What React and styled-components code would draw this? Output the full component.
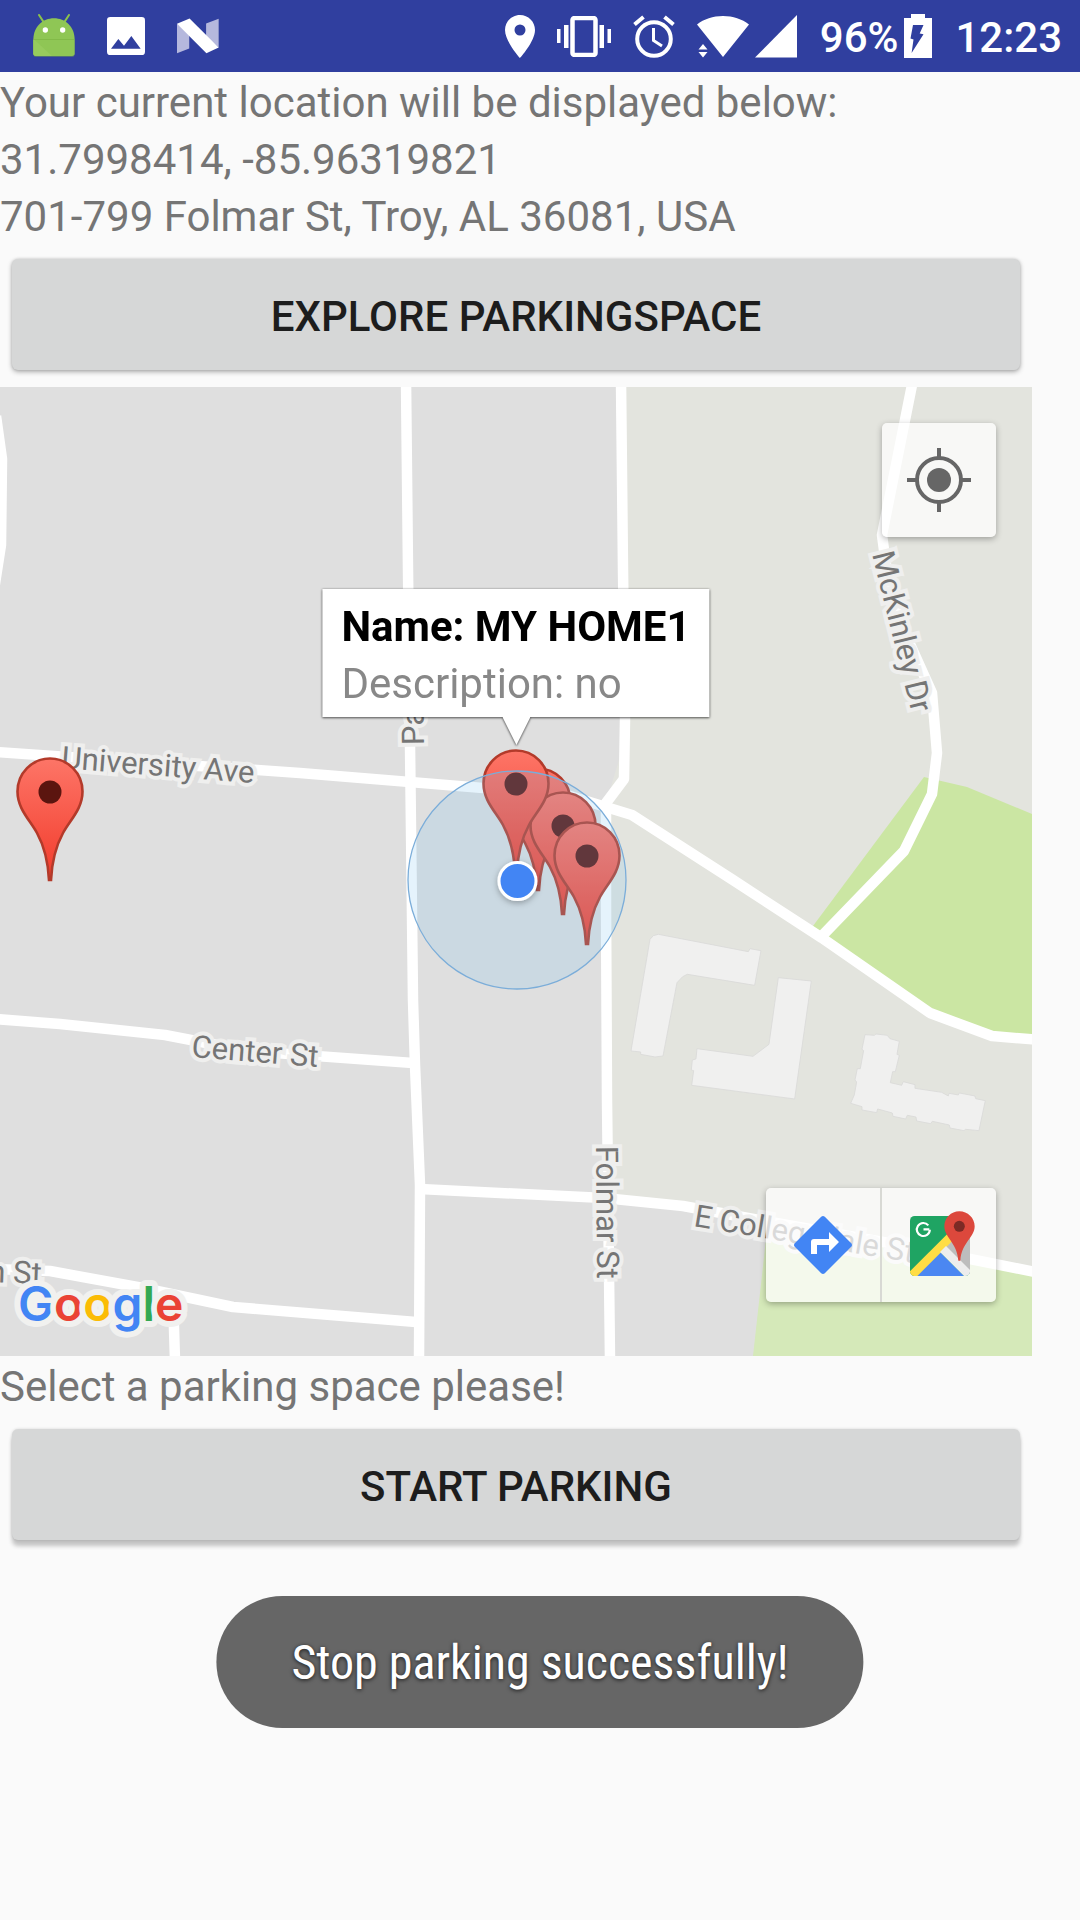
import React from "react";
import styled, { createGlobalStyle } from "styled-components";

const GlobalStyle = createGlobalStyle`
  *, *::before, *::after { box-sizing: border-box; }
  html, body { margin: 0; padding: 0; background: #fafafa; }
  body { font-family: Roboto, "Noto Sans", "Liberation Sans", sans-serif; }
`;

const Screen = styled.div`
  min-height: 100vh;
  background: #fafafa;
`;

const StatusBar = styled.header`
  display: flex;
  justify-content: space-between;
  align-items: center;
  height: 72px;
  padding: 0 18px 0 33px;
  background: #303f9f;
  color: #fff;
`;

const StatusGroup = styled.div`
  display: flex;
  align-items: center;
  gap: ${(p) => p.$gap}px;

  svg { display: block; flex: none; }
`;

const StatusText = styled.span`
  padding-top: 4px;
  font-size: 42px;
  font-weight: 500;
  line-height: 48px;
`;

const Content = styled.main`
  padding-right: 48px;
`;

const TextBlock = styled.section`
  padding-top: 2px;
  color: #757575;
  font-size: 42px;
  line-height: 57px;
`;

const Line = styled.p`
  margin: 0;
`;

const ActionButton = styled.button`
  display: block;
  width: calc(100% - 24px);
  height: 111px;
  margin: 14px 12px 17px;
  padding: 4px 0 0;
  border: 0;
  border-radius: 6px;
  background: #d6d7d7;
  color: #1d1d1d;
  font: 500 42px/48px Roboto, "Liberation Sans", sans-serif;
  text-transform: uppercase;
  box-shadow: ${(p) =>
    p.$raised
      ? "0 6px 4px rgba(0, 0, 0, 0.22), 0 0 3px rgba(0, 0, 0, 0.15)"
      : "0 2px 5px rgba(0, 0, 0, 0.3), 0 0 3px rgba(0, 0, 0, 0.15)"};
`;

const MapFrame = styled.section`
  position: relative;
  overflow: hidden;
`;

const MapCanvas = styled.svg`
  display: block;
  width: 100%;
  height: auto;
  background: #dfdfdf;
`;

const StreetLabel = styled.text`
  font-family: Roboto, "Liberation Sans", sans-serif;
  font-size: 31px;
  fill: #757575;
  stroke: #efefee;
  stroke-width: 8px;
  paint-order: stroke;
`;

const Wordmark = styled.text`
  font-family: Inter, Roboto, sans-serif;
  font-size: 48px;
  font-weight: 600;
  stroke: #f1f1ef;
  stroke-width: 12px;
  stroke-linejoin: round;
  paint-order: stroke;
`;

const InfoWindow = styled.div`
  position: absolute;
  left: 50%;
  bottom: 63.1%;
  transform: translateX(-50%);
  display: flex;
  flex-direction: column;
  align-items: center;
  filter: drop-shadow(0 1px 1px rgba(0, 0, 0, 0.5)) drop-shadow(0 0 1px rgba(0, 0, 0, 0.3));

  svg { display: block; }
`;

const InfoBody = styled.div`
  padding: 9px 19px 5px;
  background: #fff;
  font-size: 42px;
  line-height: 57px;
  white-space: nowrap;
`;

const InfoTitle = styled.p`
  margin: 0;
  color: #000;
  font-weight: 700;
`;

const InfoText = styled.p`
  margin: 0;
  color: #888;
`;

const MapControls = styled.div`
  position: absolute;
  right: 36px;
  ${(p) => (p.$top ? "top: 36px;" : "bottom: 54px;")}
  display: flex;
  border-radius: 5px;
  overflow: hidden;
  box-shadow: 0 2px 6px rgba(0, 0, 0, 0.3);
`;

const MapButton = styled.button`
  display: flex;
  align-items: center;
  justify-content: center;
  box-sizing: content-box;
  width: 114px;
  height: 114px;
  padding: 0;
  border: 0;
  background: rgba(255, 255, 255, 0.73);

  & + & { border-left: 2px solid #d8d9d4; }
`;

const Toast = styled.div`
  position: fixed;
  left: 50%;
  bottom: 192px;
  transform: translateX(-50%);
  display: flex;
  align-items: center;
  height: 132px;
  padding: 2px 75px 0;
  border-radius: 66px;
  background: #666;
  color: #fff;
  font-family: "Roboto Condensed", Roboto, sans-serif;
  font-size: 48px;
  line-height: 56px;
  white-space: nowrap;
  text-shadow: 0 1px 4px rgba(0, 0, 0, 0.75);
`;

const AndroidIcon = () => (
  <svg width="42" height="44" viewBox="99 42 126 132" aria-hidden="true">
    <path d="M117 45 132 68M207 45 192 68" stroke="#8bc34a" strokeWidth="6" strokeLinecap="round" />
    <path d="M100 121V162q0 9 8 9H216q8 0 8-9V121z" fill="#4f6f77" />
    <path d="M100 118C101 80 128 55 162 55s61 25 62 63V160q0 8-8 8H108q-8 0-8-8z" fill="#8fc655" />
    <path d="M104 120 156 168H108q-8 0-8-8V120z" fill="#97cb5d" />
    <path d="M101 118.500H223" stroke="#7cb342" strokeWidth="2" />
    <circle cx="136" cy="90" r="8" fill="#fff" />
    <circle cx="188" cy="90" r="8" fill="#fff" />
  </svg>
);

const PictureIcon = () => (
  <svg width="38" height="38" viewBox="321 51 114 114" aria-hidden="true">
    <rect x="321" y="51" width="114" height="114" rx="10" fill="#fff" />
    <path d="M333 146 355 117 372 137 394 108 422 146z" fill="#303f9f" />
  </svg>
);

const NougatIcon = () => (
  <svg width="42" height="36" viewBox="531 54 127 108" aria-hidden="true">
    <path d="M531 71 568 100V146L531 160zM619 70 657 56V143L619 110z" fill="#b5b8dd" />
    <path d="M531 71 569 55 657 143 620 160z" fill="#fff" />
  </svg>
);

const PlaceIcon = () => (
  <svg width="30" height="43" viewBox="0 0 30 43" aria-hidden="true">
    <path
      fill="#fff"
      fillRule="evenodd"
      d="M15 0C6.700 0 0 6.700 0 15c0 11.500 15 28 15 28s15-16.500 15-28C30 6.700 23.300 0 15 0zm0 9.500a5.500 5.500 0 1 1 0 11 5.500 5.500 0 0 1 0-11z"
    />
  </svg>
);

const VibrateIcon = () => (
  <svg width="54" height="41" viewBox="0 0 54 41" fill="#fff" aria-hidden="true">
    <path d="M0 13h3.500v14H0zM7 9h4.500v23H7zM42.500 9H47v23h-4.500zM50.500 13H54v14h-3.500z" />
    <rect x="15.500" y="2" width="23" height="37" rx="2" fill="none" stroke="#fff" strokeWidth="4.500" />
  </svg>
);

const AlarmIcon = () => (
  <svg width="42" height="43" viewBox="0 0 42 43" fill="none" stroke="#fff" aria-hidden="true">
    <circle cx="21" cy="24" r="16.800" strokeWidth="4" />
    <path d="M1.500 9.500 10.500 2M40.500 9.500 31.500 2" strokeWidth="4" />
    <path d="M20.500 13V25.500L29 31" strokeWidth="3" />
  </svg>
);

const WifiIcon = () => (
  <svg width="52" height="43" viewBox="0 0 52 43" fill="#fff" aria-hidden="true">
    <path d="M26 42 0 9.500C7 4 16 1 26 1s19 3 26 8.500zM6 29 10.500 34.500H1.500zM6 42.500 10.500 37H1.500z" />
  </svg>
);

const SignalIcon = () => (
  <svg width="42" height="43" viewBox="0 0 42 43" aria-hidden="true">
    <path d="M42 0V42.500H0z" fill="#fff" />
  </svg>
);

const BatteryIcon = () => (
  <svg width="28" height="44" viewBox="0 0 28 44" aria-hidden="true">
    <path d="M7 0H21V4H28V44H0V4H7z" fill="#fff" />
    <path d="M9 11H19.500L15.700 19.500 19.500 20.300 7.600 39 9.500 25.500 6.500 24.500z" fill="#303f9f" />
  </svg>
);

const CrosshairIcon = () => (
  <svg width="64" height="64" viewBox="0 0 64 64" aria-hidden="true">
    <circle cx="32" cy="32" r="12" fill="#666" />
    <circle cx="32" cy="32" r="22" fill="none" stroke="#666" strokeWidth="4" />
    <path d="M32 0V9M32 55V64M0 32H9M55 32H64" stroke="#666" strokeWidth="4" />
  </svg>
);

const DirectionsIcon = () => (
  <svg width="60" height="60" viewBox="0 0 60 60" aria-hidden="true">
    <path
      d="M28.200 1.800q1.800-1.600 3.600 0L58.200 28.200q1.600 1.800 0 3.600L31.800 58.200q-1.800 1.600-3.600 0L1.800 31.800q-1.600-1.800 0-3.600z"
      fill="#4285f4"
    />
    <path d="M18 39V27q0-3 3-3H36V17L46 27 36 37V30H24V39z" fill="#fff" />
  </svg>
);

const MapsIcon = () => (
  <svg width="72" height="72" viewBox="0 0 216 216" aria-hidden="true">
    <clipPath id="maps-tile">
      <rect x="21" y="21" width="180" height="180" rx="14" />
    </clipPath>
    <g clipPath="url(#maps-tile)">
      <rect x="21" y="21" width="180" height="180" fill="#1fa463" />
      <path d="M111 129 201 39V201z" fill="#bdbdbd" />
      <path d="M30 210 111 129 192 210z" fill="#4b87f2" />
      <path d="M13 195 145 63 163 81 31 213z" fill="#ffdd44" />
      <path d="M111 129 129 111 215 197 197 215z" fill="#ededed" />
    </g>
    <path
      d="M79 61H61.500M76 49A19.500 19.500 0 1 0 80.500 62"
      fill="none"
      stroke="#fff"
      strokeWidth="6.500"
    />
    <path
      d="M169 7c-25 0-45 20-45 45 0 34 38 48 42 103h6c4-55 43-69 43-103 0-25-21-45-46-45z"
      fill="#dc483c"
    />
    <circle cx="169" cy="52" r="16.500" fill="#7c2a25" />
  </svg>
);

const Marker = ({ x, y }) => (
  <g transform={`translate(${x} ${y})`}>
    <path
      d="M-1 0C-2-20-7-36-13-47C-20-60-32.500-71-32.500-88.500A32.500 33 0 0 1 32.500-88.500C32.500-71 20-60 13-47C7-36 2-20 1 0z"
      fill="url(#marker-fill)"
      stroke="#b33a2a"
      strokeWidth="2.600"
    />
    <circle cy="-88" r="11.500" fill="#5b150f" />
  </g>
);

const roads = [
  "M-4 416 2 459 1 545-6 590",
  "M406 380 408 570 410 745 413 1000 415 1065 420 1185 419 1360",
  "M621 380 623 570 625 720 624 779 606 803 606 900 607 1100 610 1360",
  "M-5 752 300 773 483 788 570 796 632 815 733 880 822 938 930 1013 992 1036 1040 1040",
  "M913 380 882 535 888 580 909 642 932 693 937 753 932 794 904 851 818 940",
  "M-5 1019 60 1024 165 1035 248 1051 413 1063",
  "M420 1189 604 1198 683 1206 765 1221 883 1242 970 1259 1040 1273",
  "M-5 1269 50 1271 143 1288 233 1307 416 1322",
  "M173 1296 175 1360",
];

const wordmark = [
  ["G", "#4285f4"],
  ["o", "#ea4335"],
  ["o", "#fbbc05"],
  ["g", "#4285f4"],
  ["l", "#34a853"],
  ["e", "#ea4335"],
];

const CityMap = () => (
  <MapCanvas viewBox="0 387 1032 969" role="img" aria-label="Map of parking spaces">
    <defs>
      <linearGradient id="marker-fill" x1="0" y1="0" x2="0" y2="1">
        <stop offset="0" stopColor="#fd7567" />
        <stop offset="1" stopColor="#f23b2b" />
      </linearGradient>
      <filter id="dot-shadow" x="-50%" y="-50%" width="200%" height="200%">
        <feDropShadow dx="0" dy="2" stdDeviation="3" floodOpacity="0.3" />
      </filter>
    </defs>

    <path d="M621 387 625 740 606 803 608 1198 683 1206 765 1221 1032 1271V387z" fill="#e3e4de" />
    <path d="M924 777 967 787 1032 814V1040L992 1036 930 1013 810 930z" fill="#cbe6a3" />
    <path d="M768 1221 1032 1272V1356H753z" fill="#d5e9b9" />

    <g transform="translate(600 880) scale(0.3333)" fill="#f0f0ef" stroke="#dadad9" strokeWidth="2.500">
      <path d="M150 178 160 167 175 163 445 215 450 206 483 212 464 316 262 283 248 290 231 308 189 528 165 531 122 523 122 516 93 513z" />
      <path d="M535 293 634 303 584 657 275 616 281 572 274 570 277 540 288 537 291 506 459 529 507 493z" />
      <path d="M795 464 823 466 828 462 862 466 870 476 898 484 891 523 898 526 886 575 878 575 871 608 905 616 910 605 945 614 945 625 1025 637 1045 648 1047 640 1075 645 1078 639 1125 648 1127 656 1156 662 1137 752 1097 748 1092 752 1050 744 1048 735 997 724 992 731 950 723 948 711 922 706 917 717 879 709 877 699 833 687 830 698 786 690 786 680 752 670 763 645 770 606 765 600 772 566 781 566 791 512 786 508z" />
    </g>

    <g fill="none" stroke="#fff" strokeWidth="10.500" strokeLinejoin="round">
      {roads.map((d) => (
        <path key={d} d={d} />
      ))}
    </g>

    <StreetLabel transform="translate(61 768) rotate(4.500)">University Ave</StreetLabel>
    <StreetLabel transform="translate(191 1057) rotate(4.500)">Center St</StreetLabel>
    <StreetLabel transform="translate(872 554) rotate(76)">McKinley Dr</StreetLabel>
    <StreetLabel transform="translate(596 1146) rotate(89.500)">Folmar St</StreetLabel>
    <StreetLabel transform="translate(693 1226) rotate(9.500)">E Collegedale St</StreetLabel>
    <StreetLabel transform="translate(424 745) rotate(-91)">Pa</StreetLabel>
    <StreetLabel transform="translate(-12 1282) rotate(2)">n St</StreetLabel>

    <Wordmark x="18" y="1321">
      {wordmark.map(([letter, color], i) => (
        <tspan key={i} fill={color}>
          {letter}
        </tspan>
      ))}
    </Wordmark>

    <Marker x={50} y={880} />
    <Marker x={538} y={890} />
    <Marker x={563} y={914} />
    <Marker x={587} y={944} />
    <Marker x={516} y={872} />

    <circle cx="517" cy="880" r="109" fill="rgba(125,195,240,0.2)" stroke="#7badd9" strokeWidth="1.300" />
    <circle cx="517.500" cy="881" r="18.500" fill="#4285f4" stroke="#fff" strokeWidth="3" filter="url(#dot-shadow)" />
  </MapCanvas>
);

export default function App() {
  return (
    <Screen>
      <GlobalStyle />
      <StatusBar>
        <StatusGroup $gap={32}>
          <AndroidIcon />
          <PictureIcon />
          <NougatIcon />
        </StatusGroup>
        <StatusGroup $gap={23}>
          <StatusGroup $gap={22}>
            <PlaceIcon />
            <VibrateIcon />
            <AlarmIcon />
            <StatusGroup $gap={6}>
              <WifiIcon />
              <SignalIcon />
            </StatusGroup>
          </StatusGroup>
          <StatusGroup $gap={6}>
            <StatusText>96%</StatusText>
            <BatteryIcon />
          </StatusGroup>
          <StatusText as="time">12:23</StatusText>
        </StatusGroup>
      </StatusBar>

      <Content>
        <TextBlock>
          <Line>Your current location will be displayed below:</Line>
          <Line>31.7998414, -85.96319821</Line>
          <Line>701-799 Folmar St, Troy, AL 36081, USA</Line>
        </TextBlock>
        <ActionButton type="button">Explore ParkingSpace</ActionButton>

        <MapFrame>
          <CityMap />
          <InfoWindow>
            <InfoBody>
              <InfoTitle>Name: MY HOME1</InfoTitle>
              <InfoText>Description: no</InfoText>
            </InfoBody>
            <svg width="28" height="28" viewBox="0 0 28 28" aria-hidden="true">
              <path d="M0 0H28L14 28z" fill="#fff" />
            </svg>
          </InfoWindow>
          <MapControls $top>
            <MapButton type="button" aria-label="My location">
              <CrosshairIcon />
            </MapButton>
          </MapControls>
          <MapControls>
            <MapButton type="button" aria-label="Directions">
              <DirectionsIcon />
            </MapButton>
            <MapButton type="button" aria-label="Open in Google Maps">
              <MapsIcon />
            </MapButton>
          </MapControls>
        </MapFrame>

        <TextBlock>
          <Line>Select a parking space please!</Line>
        </TextBlock>
        <ActionButton type="button" $raised>
          Start Parking
        </ActionButton>
      </Content>

      <Toast role="status">Stop parking successfully!</Toast>
    </Screen>
  );
}
